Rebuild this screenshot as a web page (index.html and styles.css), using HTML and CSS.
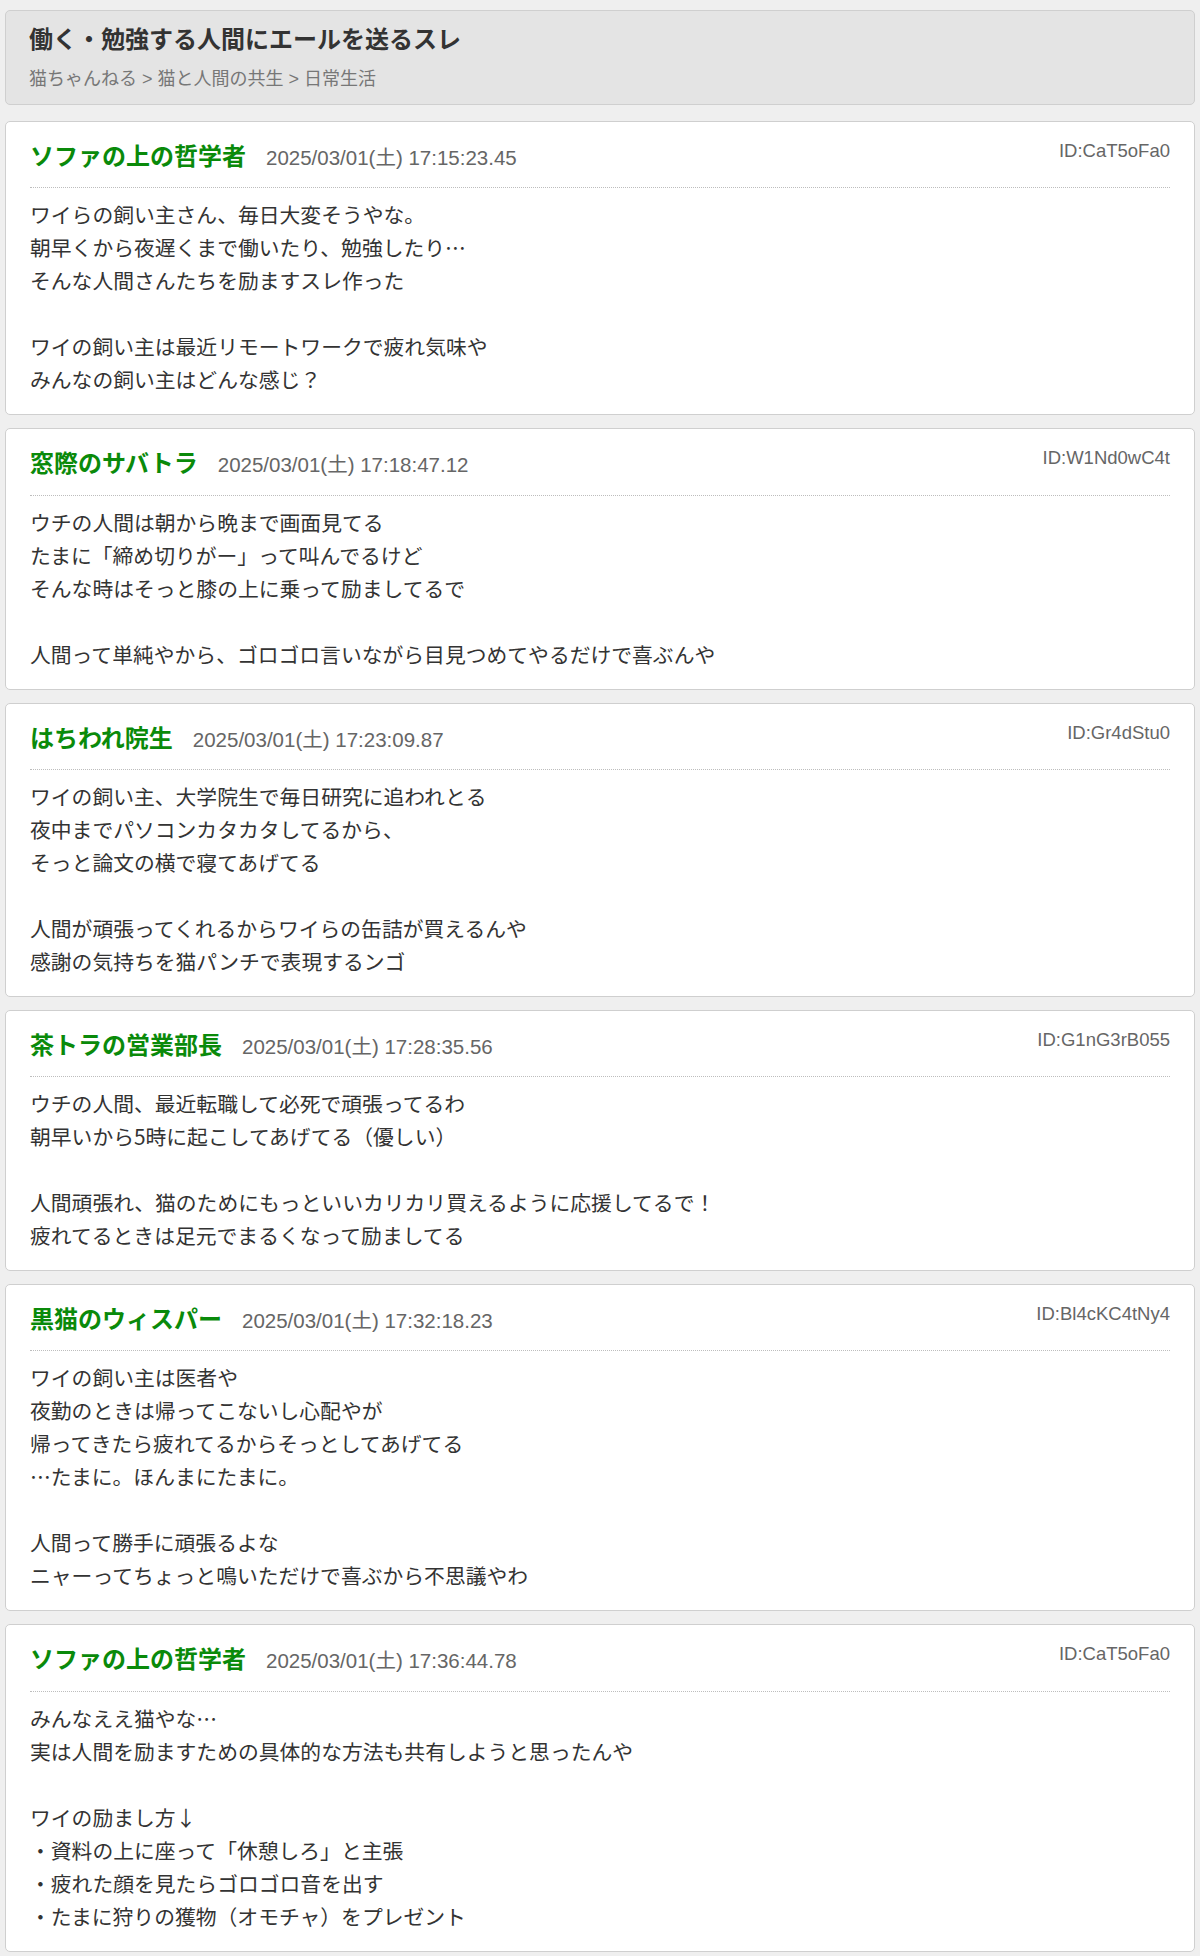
FILE: index.html
```html
<!DOCTYPE html>
<html lang="ja">
<head>
  <meta charset="UTF-8">
  <title>働く・勉強する人間にエールを送るスレ</title>
  <link rel="stylesheet" href="styles.css">
</head>
<body>
  <div class="thread">
    <div class="thread-header">
      <h1 class="thread-title">働く・勉強する人間にエールを送るスレ</h1>
      <div class="breadcrumb">猫ちゃんねる &gt; 猫と人間の共生 &gt; 日常生活</div>
    </div>

    <div class="post">
      <div class="post-head">
        <div class="post-meta">
          <span class="name">ソファの上の哲学者</span>
          <span class="date">2025/03/01(土) 17:15:23.45</span>
        </div>
        <span class="uid">ID:CaT5oFa0</span>
      </div>
      <div class="post-body">ワイらの飼い主さん、毎日大変そうやな。<br>朝早くから夜遅くまで働いたり、勉強したり…<br>そんな人間さんたちを励ますスレ作った<br><br>ワイの飼い主は最近リモートワークで疲れ気味や<br>みんなの飼い主はどんな感じ？</div>
    </div>

    <div class="post">
      <div class="post-head">
        <div class="post-meta">
          <span class="name">窓際のサバトラ</span>
          <span class="date">2025/03/01(土) 17:18:47.12</span>
        </div>
        <span class="uid">ID:W1Nd0wC4t</span>
      </div>
      <div class="post-body">ウチの人間は朝から晩まで画面見てる<br>たまに「締め切りがー」って叫んでるけど<br>そんな時はそっと膝の上に乗って励ましてるで<br><br>人間って単純やから、ゴロゴロ言いながら目見つめてやるだけで喜ぶんや</div>
    </div>

    <div class="post">
      <div class="post-head">
        <div class="post-meta">
          <span class="name">はちわれ院生</span>
          <span class="date">2025/03/01(土) 17:23:09.87</span>
        </div>
        <span class="uid">ID:Gr4dStu0</span>
      </div>
      <div class="post-body">ワイの飼い主、大学院生で毎日研究に追われとる<br>夜中までパソコンカタカタしてるから、<br>そっと論文の横で寝てあげてる<br><br>人間が頑張ってくれるからワイらの缶詰が買えるんや<br>感謝の気持ちを猫パンチで表現するンゴ</div>
    </div>

    <div class="post">
      <div class="post-head">
        <div class="post-meta">
          <span class="name">茶トラの営業部長</span>
          <span class="date">2025/03/01(土) 17:28:35.56</span>
        </div>
        <span class="uid">ID:G1nG3rB055</span>
      </div>
      <div class="post-body">ウチの人間、最近転職して必死で頑張ってるわ<br>朝早いから5時に起こしてあげてる（優しい）<br><br>人間頑張れ、猫のためにもっといいカリカリ買えるように応援してるで！<br>疲れてるときは足元でまるくなって励ましてる</div>
    </div>

    <div class="post">
      <div class="post-head">
        <div class="post-meta">
          <span class="name">黒猫のウィスパー</span>
          <span class="date">2025/03/01(土) 17:32:18.23</span>
        </div>
        <span class="uid">ID:Bl4cKC4tNy4</span>
      </div>
      <div class="post-body">ワイの飼い主は医者や<br>夜勤のときは帰ってこないし心配やが<br>帰ってきたら疲れてるからそっとしてあげてる<br>…たまに。ほんまにたまに。<br><br>人間って勝手に頑張るよな<br>ニャーってちょっと鳴いただけで喜ぶから不思議やわ</div>
    </div>

    <div class="post">
      <div class="post-head">
        <div class="post-meta">
          <span class="name">ソファの上の哲学者</span>
          <span class="date">2025/03/01(土) 17:36:44.78</span>
        </div>
        <span class="uid">ID:CaT5oFa0</span>
      </div>
      <div class="post-body">みんなええ猫やな…<br>実は人間を励ますための具体的な方法も共有しようと思ったんや<br><br>ワイの励まし方↓<br>・資料の上に座って「休憩しろ」と主張<br>・疲れた顔を見たらゴロゴロ音を出す<br>・たまに狩りの獲物（オモチャ）をプレゼント</div>
    </div>
  </div>
</body>
</html>
```

FILE: styles.css
```css
* {
  box-sizing: border-box;
}

body {
  margin: 0;
  padding: 10px 5px 4px;
  background: #efefef;
  color: #333;
  font-family: 'Liberation Sans', 'Noto Sans CJK JP', sans-serif;
}

.thread-header {
  background: #e4e4e4;
  border: 1px solid #cfcfcf;
  border-radius: 5px;
  padding: 13px 23px 11px;
  margin-bottom: 16px;
}

.thread-title {
  margin: 0 0 11px;
  font-size: 24px;
  line-height: 31px;
  font-weight: bold;
  color: #333;
}

.breadcrumb {
  font-size: 18px;
  line-height: 27px;
  color: #777;
}

.post {
  background: #fff;
  border: 1px solid #cfcfcf;
  border-radius: 5px;
  padding: 18px 24px;
  margin-bottom: 13px;
}

.post-head {
  display: flex;
  justify-content: space-between;
  align-items: flex-start;
  padding-bottom: 13px;
  border-bottom: 1px dotted #bdbdbd;
  margin-bottom: 10px;
}

.post-meta {
  display: flex;
  align-items: baseline;
  line-height: 33.3px;
}

.name {
  font-size: 24px;
  font-weight: bold;
  color: #0a8a0a;
}

.date {
  margin-left: 20px;
  font-size: 20.5px;
  color: #666;
}

.uid {
  font-size: 18.5px;
  line-height: 22px;
  color: #666;
}

.post-body {
  font-family: 'Noto Sans CJK JP', sans-serif;
  font-size: 20.8px;
  line-height: 33px;
  color: #333;
}
```
